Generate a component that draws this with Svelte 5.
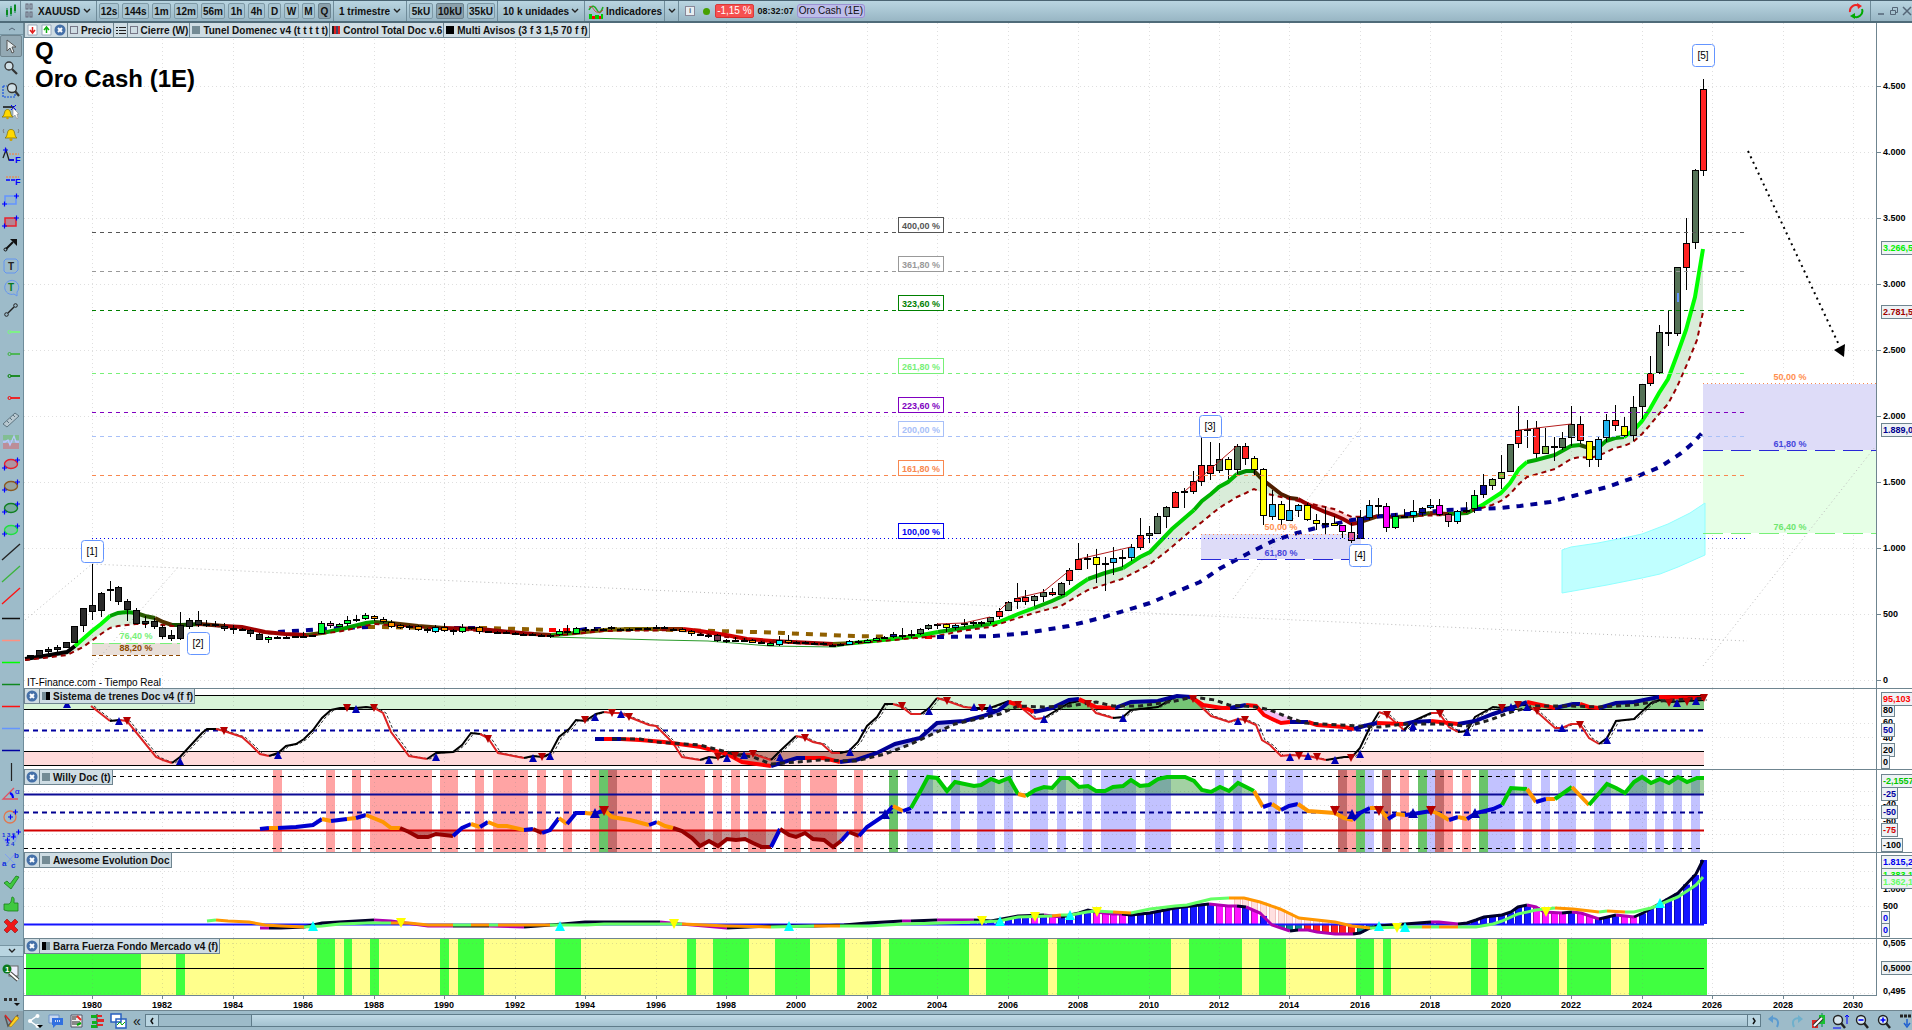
<script lang="ts">
    type Point = [number, number];
    type Run = [string, string];

    // Horizontal scale: one bar per quarter, bar 0 is 1980 Q1
    const barX = (q: number) => 92 + q * 8.805;
    const priceY = (price: number) => 680 - price * 0.132;

    const years = Array.from({ length: 26 }, (_, i) => 1980 + i * 2);
    const prices = [0, 500, 1000, 1500, 2000, 2500, 3000, 3500, 4000, 4500];
    const priceLabel = (p: number) => (p < 1000 ? String(p) : `${Math.floor(p / 1000)}.${String(p % 1000).padStart(3, "0")}`);

    const intervals = [
        { name: "12s", width: 20 },
        { name: "144s", width: 27 },
        { name: "1m", width: 19 },
        { name: "12m", width: 24 },
        { name: "56m", width: 24 },
        { name: "1h", width: 17 },
        { name: "4h", width: 17 },
        { name: "D", width: 13 },
        { name: "W", width: 15 },
        { name: "M", width: 13 },
        { name: "Q", width: 13 },
    ];
    const units = [
        { name: "5kU", width: 24 },
        { name: "10kU", width: 28 },
        { name: "35kU", width: 28 },
    ];
    let interval = $state("Q");
    let unit = $state("10kU");
    let tool = $state(0);

    const tools: [string, string, string][] = [
        ["cursor", "#ddd", "Cursor"],
        ["zoom", "#333", "Zoom"],
        ["zoomarea", "#333", "Zoom de zona"],
        ["bellset", "#ffd800", "Crear alerta"],
        ["bell", "#ffd800", "Alertas"],
        ["fibext", "#00f", "Extensiones Fibonacci"],
        ["fib", "#00f", "Retrocesos Fibonacci"],
        ["rect", "#6495ff", "Zona azul"],
        ["rect", "#e8202c", "Zona roja"],
        ["arrow", "#111", "Flecha"],
        ["text", "#222", "Texto"],
        ["note", "#0a7a1a", "Nota"],
        ["segment", "#222", "Segmento"],
        ["ray", "#78ff78", "Rayo verde claro"],
        ["ray", "#3cb43c", "Rayo verde"],
        ["ray", "#008000", "Rayo verde oscuro"],
        ["ray", "#ff0000", "Rayo rojo"],
        ["ruler", "#5d7480", "Regla"],
        ["channel", "#a0b4ff", "Canal"],
        ["ellipse", "#e8202c", "Elipse roja"],
        ["ellipse", "#8b5a20", "Elipse marrón"],
        ["ellipse", "#108020", "Elipse verde"],
        ["ellipse", "#20e040", "Elipse verde claro"],
        ["line", "#222", "Recta negra"],
        ["line", "#3cb43c", "Recta verde"],
        ["line", "#ff1010", "Recta roja"],
        ["hline", "#111", "Horizontal negra"],
        ["hline", "#ff9080", "Horizontal salmón"],
        ["hline", "#00ff00", "Horizontal lima"],
        ["hline", "#108820", "Horizontal verde"],
        ["hline", "#ff1010", "Horizontal roja"],
        ["hline", "#6495ff", "Horizontal azul"],
        ["hline", "#0000a0", "Horizontal marino"],
        ["vline", "#222", "Vertical"],
        ["angle", "#e05060", "Ángulo"],
        ["circle", "#e07850", "Círculo"],
        ["waves", "#1030e0", "Ondas de Elliott"],
        ["abc", "#1030e0", "Ondas abc"],
        ["check", "#40c840", "Correcto"],
        ["thumb", "#40c840", "Me gusta"],
        ["cross", "#f01818", "Borrar"],
    ];

    const palette: Record<string, string> = {
        K: "#2b2b2b",
        G: "#00ff33",
        P: "#e0559b",
        O: "#ff9500",
        C: "#00ffff",
        M: "#ff00ff",
        A: "#7a3a50",
        N: "#0c0c9c",
        S: "#557257",
        R: "#ff2222",
        Y: "#ffff00",
        B: "#22b4ee",
        L: "#7fba3c",
    };

    // One candle per quarter from bar -7: colour, high, body top, body bottom, low
    const candles = `K655,655,656,657 K650,650,656,656 K647,649,652,654 K645,647,650,652 K642,642,648,648 K626,626,643,643 K608,608,626,632
K564,605,612,620 K592,593,611,617 K581,589,591,601 K586,587,602,605 K599,601,610,621 K608,610,624,624 K616,621,624,628 K618,621,627,629
K625,627,637,639 K630,635,639,641 K612,625,639,640 K618,620,627,629 K611,620,625,627 K620,624,625,627 K621,624,626,627 K623,626,629,631
K625,628,629,634 K628,629,631,631 K629,630,634,637 K633,634,640,640 G636,637,640,643 K636,637,638,639 C636,637,638,639 K636,636,638,638
K632,636,637,638 K635,635,636,637 G621,623,634,634 P621,623,626,628 G623,624,627,627 G616,620,624,626 K615,619,620,622 G613,615,619,620
O615,616,619,621 O617,619,622,623 O620,622,627,628 O624,625,628,629 O625,626,628,630 O625,626,630,631 O628,629,631,633 C625,627,632,633
O623,627,631,632 K629,630,632,635 G624,627,632,633 K627,627,629,630 O626,627,632,634 K631,631,633,633 K631,632,633,634 K631,632,633,634
K632,633,634,635 K633,634,635,635 K633,634,635,636 K634,635,636,636 K634,635,636,638 G629,631,635,636 P625,631,633,635 G627,628,634,634
K627,629,630,632 K627,629,630,631 K628,629,630,631 M626,627,629,630 K628,629,630,631 K628,629,630,631 K628,628,630,630 K627,628,629,630
K625,627,628,629 P626,627,629,629 K628,629,630,630 O628,629,632,632 O630,631,634,636 K633,634,635,636 K634,635,636,638 A634,635,641,642
K639,640,641,643 K637,640,641,642 K638,640,641,642 O639,640,643,643 K641,642,643,644 G642,643,646,646 C636,640,645,646 O635,640,643,644
K641,642,643,644 K641,642,643,644 K642,643,644,645 K642,643,644,645 K644,645,646,646 C643,644,646,646 C640,641,645,645 O640,641,643,644
G639,640,643,643 G637,638,641,641 K636,637,638,639 N632,634,637,638 K628,635,636,639 K630,634,636,638 S628,629,634,635 S624,625,629,630
R623,624,626,629 Y623,624,628,632 B624,625,628,630 R619,623,625,627 K621,622,624,626 K621,622,624,626 S617,617,622,624 R608,611,617,619
S601,602,611,611 R583,598,602,609 R590,597,602,605 S595,596,601,606 S589,592,597,602 R588,592,595,596 S582,583,595,596 R568,570,581,585
R543,559,570,570 K554,558,559,569 Y549,557,565,583 B557,563,565,591 B547,558,563,575 K550,557,559,567 B544,547,558,561 R518,535,548,550
S526,533,536,543 S513,516,534,534 S506,507,517,528 R491,492,508,508 K488,491,492,508 R471,481,492,494 R426,465,482,486 R442,465,474,480
S443,459,471,473 Y457,459,470,479 S444,446,470,474 R443,446,459,465 Y456,458,470,475 Y468,469,516,525 B490,504,517,520 Y501,504,520,525
B497,510,521,521 B504,505,511,517 Y503,505,520,521 Y514,520,524,530 K507,523,524,534 Y516,523,526,526 M525,525,532,538 P523,532,541,543
N510,517,539,539 B500,505,518,520 K498,505,506,516 M503,506,528,532 G513,516,528,529 K509,516,517,518 C500,511,516,522 N507,508,513,516
B499,505,508,509 M499,505,515,516 P513,514,522,527 C510,511,522,524 O502,510,511,513 G490,495,509,513 N474,485,495,498 L478,479,486,490
L455,472,479,489 S444,444,472,472 R406,430,444,448 K420,429,431,448 R421,428,454,458 L428,446,454,454 Y437,446,448,461 S432,438,448,450
S406,424,438,446 R416,424,441,444 Y441,441,460,467 B437,439,460,467 B414,420,438,442 R405,420,426,431 Y417,426,436,437 S396,407,436,441
S384,384,407,419 R356,373,384,386 S325,332,373,374 K310,332,334,346 S267,267,334,336 R218,243,268,290 S169,170,243,249 R79,89,171,176`
        .split(/\s+/)
        .map((entry, i) => {
            const [high, top, bottom, low] = entry.slice(1).split(",").map(Number);
            return { x: Math.round(barX(i - 7)), fill: palette[entry[0]], high, top, bottom, low };
        });

    const parse = (text: string): Point[] => text.trim().split(/\s+/).map((p) => p.split(",").map(Number) as Point);

    // Each run starts where the previous one ended
    function segments(runs: Run[]) {
        let last = "";
        return runs.map(([color, text]) => {
            const points = `${last} ${text}`.trim();
            last = text.trim().split(/\s+/).pop() ?? "";
            return { color, points };
        });
    }
    const joined = (runs: Run[]) => runs.map((r) => r[1]).join(" ");

    const average: Run[] = [
        ["#000", "25,659 44,656 67,652 75,646"],
        ["#00ff00", "92,631 101,624 110,616"],
        ["#00a000", "118,613 127,612 136,613"],
        ["#285a00", "145,616 155,618"],
        ["#503200", "163,622 172,625"],
        ["#145000", "181,625 200,624"],
        ["#5a1e00", "224,626"],
        ["#a00000", "242,627 265,632 285,634 306,635"],
        ["#505000", "322,633"],
        ["#00a000", "342,629 366,623 374,622"],
        ["#325a00", "391,623"],
        ["#5a3200", "418,626 444,628"],
        ["#960000", "480,629 510,632 534,634"],
        ["#781e00", "551,635"],
        ["#289600", "576,633"],
        ["#786400", "604,630 632,629 660,629"],
        ["#8c2800", "683,629"],
        ["#d20000", "700,631 726,635 747,639 772,641"],
        ["#a00000", "833,644"],
        ["#646400", "854,643"],
        ["#00dc00", "883,640 911,637 938,632"],
        ["#00a800", "964,628 990,624"],
        ["#00e800", "999,622 1018,614 1034,608"],
        ["#00b400", "1052,601 1065,595"],
        ["#00e000", "1079,585 1088,579"],
        ["#00a800", "1105,573 1123,568"],
        ["#00d400", "1140,557 1150,552 1172,529 1194,510"],
        ["#00b400", "1202,501 1211,494 1219,487 1228,482 1237,474"],
        ["#008c00", "1246,471 1254,471"],
        ["#3c3200", "1263,480"],
        ["#501e00", "1272,487 1281,494 1290,498 1298,499"],
        ["#960000", "1307,504 1316,508 1325,512 1334,515 1343,519 1352,524 1357,523"],
        ["#5a2800", "1363,521 1378,516"],
        ["#7a1e00", "1396,517"],
        ["#3c5a00", "1413,516 1430,513"],
        ["#781e00", "1448,514"],
        ["#148c00", "1467,513 1477,508"],
        ["#00ff00", "1484,504 1501,493 1510,483 1519,469 1527,462"],
        ["#00a800", "1536,460 1555,455 1571,446 1580,445"],
        ["#285000", "1589,448 1598,448"],
        ["#00a000", "1606,441 1615,438 1624,437"],
        ["#00ff00", "1634,430 1642,421 1650,409 1659,393 1668,379 1677,355 1686,330 1695,297 1703,249"],
    ];

    const lowerBand =
        "25,660 44,658 67,655 83,647 101,634 110,628 118,626 136,624 155,624 172,626 204,625 242,628 265,633 306,636 342,631 374,624 418,627 480,631 551,636 604,631 683,630 726,637 772,642 833,645 883,641 937,636 961,631 990,627 1018,618 1034,613 1061,606 1079,595 1088,590 1122,579 1149,565 1167,551 1194,528 1202,522 1219,508 1237,497 1246,493 1254,489 1263,493 1281,497 1307,503 1334,509 1352,517 1378,516 1413,516 1448,515 1475,510 1492,505 1501,501 1510,494 1519,484 1527,477 1555,469 1571,459 1580,457 1589,458 1598,456 1615,448 1624,446 1633,442 1642,434 1650,425 1659,414 1668,404 1677,387 1688,362 1697,340 1703,312";

    const slowTrend =
        "937,637 994,636 1026,633 1069,626 1104,617 1150,603 1176,592 1200,582 1219,569 1247,554 1273,541 1297,533 1320,527 1352,520 1383,516 1420,513 1447,510 1477,509 1500,508 1520,506 1550,502 1573,496 1607,487 1633,478 1660,467 1680,454 1693,443 1702,433";
    const earlyTrend: Run[] = [
        ["#000090", "278,632 309,630 340,628 368,627"],
        ["#906000", "375,627 440,628"],
        ["#000090", "460,628 480,628"],
        ["#906000", "486,628 520,629 549,630"],
        ["#ff0000", "551,630 580,630"],
        ["#000090", "586,629 610,629"],
        ["#906000", "640,629 714,631 754,632 783,633 854,636 911,637"],
        ["#ff0000", "937,637"],
    ];

    // Area between two lines, limited to the stretch from x0 to x1
    function band(upper: string, lower: string, x0: number, x1: number) {
        const inside = (p: Point) => p[0] >= x0 && p[0] <= x1;
        return [...parse(upper).filter(inside), ...parse(lower).filter(inside).reverse()].join(" ");
    }
    const bands = [
        [24, 165],
        [880, 1282],
        [1470, 1704],
    ].map(([a, b]) => band(joined(average), lowerBand, a, b));

    const divergences = ["937,624 964,623 990,617", "999,611 1008,602", "1017,598 1043,592 1070,570", "1079,559 1131,547", "1185,491 1237,446", "1519,430 1571,424"];

    const levels = [
        { y: 232, label: "400,00 %", color: "#555", dash: "4 4" },
        { y: 271, label: "361,80 %", color: "#999", dash: "4 4" },
        { y: 310, label: "323,60 %", color: "#008000", dash: "4 4" },
        { y: 373, label: "261,80 %", color: "#78f078", dash: "4 4" },
        { y: 412, label: "223,60 %", color: "#8000c0", dash: "4 4" },
        { y: 436, label: "200,00 %", color: "#a8c0f8", dash: "4 4" },
        { y: 475, label: "161,80 %", color: "#f88850", dash: "4 4" },
        { y: 538, label: "100,00 %", color: "#0000f0", dash: "1 3" },
    ];
    const waves = [
        { x: 92, y: 551, label: "[1]" },
        { x: 198, y: 643, label: "[2]" },
        { x: 1210, y: 426, label: "[3]" },
        { x: 1360, y: 555, label: "[4]" },
        { x: 1703, y: 55, label: "[5]" },
    ];
    const guides = ["25,620 92,564 1747,641", "93,665 179,566", "1233,599 1361,428", "1703,666 1875,447"];

    const trainFast: Run[] = [
        ["#d22", "91,706 110,721"],
        ["#000", "119,720"],
        ["#d22", "127,721 156,757 163,760 172,763"],
        ["#000", "180,757 202,733 207,729 216,729"],
        ["#d22", "224,731 242,737 251,745 260,754 269,756"],
        ["#000", "278,753 286,746 296,744 304,739 313,730 322,718 331,710 340,708 347,708 356,708 366,707 374,708"],
        ["#d22", "383,713 391,732 409,756 427,759"],
        ["#000", "436,753 453,752 462,745 471,733 480,734"],
        ["#d22", "488,738 498,753 524,758"],
        ["#000", "533,756 542,757 550,754 559,737 569,729 576,720 585,721 596,714 604,712"],
        ["#d22", "612,713 621,713 629,717 649,725 656,726 673,743 682,757 700,760"],
        ["#000", "709,757 718,758 727,755 735,755 744,754"],
        ["#d22", "753,754 771,760"],
        ["#000", "780,751 796,736"],
        ["#d22", "805,738 813,742 822,744 832,753 840,753"],
        ["#000", "849,751 858,742 867,726 877,717 885,704 893,704"],
        ["#d22", "902,707 911,714 921,714"],
        ["#000", "929,708 937,698"],
        ["#d22", "947,701 964,707 974,708"],
        ["#000", "990,708 1009,701"],
        ["#d22", "1018,705 1035,719 1044,718"],
        ["#000", "1052,713 1069,703 1079,701"],
        ["#d22", "1088,704 1096,713 1113,718"],
        ["#000", "1123,717 1131,710 1158,707 1175,697 1185,697"],
        ["#d22", "1193,699 1211,716 1229,722 1238,719 1245,720 1256,725 1262,740 1270,745 1281,756 1290,755 1308,756 1326,760"],
        ["#000", "1344,757 1352,757 1360,748 1370,727 1379,712"],
        ["#d22", "1387,715 1404,730"],
        ["#000", "1413,721 1431,713"],
        ["#d22", "1439,713 1449,727 1458,732"],
        ["#000", "1467,731 1475,717 1493,707 1502,708 1511,707 1518,705 1527,705"],
        ["#d22", "1536,711 1555,728 1562,728 1571,724 1580,724 1589,738 1599,744"],
        ["#000", "1607,738 1616,721 1634,719 1651,703 1659,700 1669,702 1704,700"],
    ];
    const trainSlow: Run[] = [
        ["#000096", "595,739 604,739"],
        ["#f00", "612,739"],
        ["#000096", "621,739"],
        ["#f00", "640,740 664,742 701,747 727,754 742,762 771,766"],
        ["#000096", "797,758 805,758"],
        ["#f00", "824,758 840,762"],
        ["#000096", "856,760 877,753 895,744 920,738 937,723 964,721 983,716 999,710 1009,702"],
        ["#f00", "1018,705 1034,712"],
        ["#000096", "1052,708 1069,700 1079,699"],
        ["#f00", "1096,707 1115,708"],
        ["#000096", "1131,702 1158,701 1177,696 1191,697"],
        ["#f00", "1203,705 1222,708 1230,708"],
        ["#000096", "1246,705"],
        ["#f00", "1256,706 1264,715 1270,718 1281,723 1290,722"],
        ["#000096", "1308,722"],
        ["#f00", "1317,725 1344,727 1354,729"],
        ["#000096", "1364,726 1377,723"],
        ["#f00", "1404,724"],
        ["#000096", "1413,722 1431,721"],
        ["#f00", "1458,724"],
        ["#000096", "1475,721 1493,714 1511,708 1527,702"],
        ["#f00", "1536,704 1555,708"],
        ["#000096", "1573,704 1580,704"],
        ["#f00", "1589,707 1599,708"],
        ["#000096", "1616,703 1634,702 1659,697"],
        ["#f00", "1704,698"],
    ];
    const trainSignal =
        "612,739 640,739 656,742 700,745 738,755 753,757 771,764 797,762 820,760 856,761 885,754 911,744 937,732 955,724 1000,714 1018,706 1044,707 1069,706 1096,702 1113,706 1140,706 1175,701 1193,697 1215,700 1229,705 1256,707 1270,710 1290,718 1305,723 1340,725 1379,727 1404,724 1440,724 1467,726 1490,720 1511,712 1535,706 1571,706 1599,707 1634,705 1659,701 1704,698";
    const trainDown = parse(
        "127,721 224,731 347,708 374,708 488,739 542,757 585,720 612,713 629,717 718,757 735,756 753,754 805,738 902,706 947,701 982,708 1018,705 1088,704 1193,699 1245,720 1299,756 1317,757 1351,758 1387,715 1440,714 1502,708 1518,705 1537,711 1580,725 1669,703 1687,702 1704,698",
    );
    const trainUp = parse(
        "67,704 119,721 180,761 278,755 356,709 436,757 533,758 550,756 595,717 621,714 709,760 727,758 744,755 780,757 850,752 929,711 974,707 990,708 1044,719 1123,718 1238,721 1290,757 1308,756 1335,760 1360,754 1413,726 1467,732 1511,707 1527,707 1562,728 1607,740 1677,703 1696,701",
    );

    const willyBands: [string, string][] = [
        ["#ffa4a4", "273,282 326,335 352,361 370,432 440,458 475,484 493,528 537,546 563,572 590,599 617,652 660,705 713,722 731,740 748,766 784,801 810,837 854,863 1347,1356 1400,1409 1444,1453 1462,1471"],
        ["#6ac46a", "599,608 889,898 1356,1365 1418,1427 1479,1488"],
        ["#c46a6a", "608,617 1338,1347 1382,1391 1435,1444"],
        ["#c2c2ff", "907,933 951,960 977,995 1004,1013 1030,1048 1057,1066 1083,1092 1101,1136 1145,1171 1215,1224 1233,1242 1268,1277 1285,1303 1365,1374 1427,1435 1488,1515 1523,1532 1541,1550 1558,1576 1594,1611 1629,1647 1655,1664 1673,1682 1691,1700"],
    ];
    const B = "#0000d0";
    const O = "#ff9600";
    const D = "#960000";
    const G = "#00c800";
    const willy: Run[] = [
        [B, "260,829 269,828"],
        [O, "278,828"],
        [B, "296,827 313,825 322,819"],
        [O, "331,821"],
        [B, "347,819"],
        [O, "356,818"],
        [B, "366,815"],
        [O, "383,822 391,828 400,828"],
        [D, "409,832 418,837 428,837 436,834 453,836"],
        [B, "462,828 471,824"],
        [O, "480,827"],
        [B, "488,822"],
        [O, "498,826 507,826 524,830"],
        [B, "533,829"],
        [D, "542,833"],
        [B, "550,830 559,818"],
        [O, "567,824"],
        [B, "576,813 585,813"],
        [O, "595,814"],
        [B, "604,810"],
        [O, "612,817 630,820 649,825"],
        [B, "657,822"],
        [O, "665,826 673,828"],
        [D, "682,831 692,838 700,846 709,841 718,846 727,839 736,840 745,839 753,843 762,847 771,847"],
        [B, "780,829"],
        [D, "789,835 796,837 805,833 813,839 824,840 833,847 841,841"],
        [B, "849,832"],
        [D, "859,836"],
        [B, "867,827 885,815 893,806"],
        [O, "903,811"],
        [B, "911,808"],
        [G, "920,792 928,777 937,778 947,791 955,782 974,786 981,785 991,779 999,782 1009,778 1018,794"],
        [O, "1026,796"],
        [G, "1035,790 1044,787 1052,788 1061,778 1069,778 1079,787 1088,786 1096,791 1105,791 1113,787 1123,786 1131,780 1140,786 1149,785 1158,779 1167,777 1185,777 1194,781 1202,790 1211,792 1220,787 1229,791 1238,783 1254,791"],
        [O, "1263,807"],
        [B, "1272,804"],
        [O, "1281,810"],
        [B, "1289,806 1298,804"],
        [O, "1308,811 1335,813 1344,818 1353,820"],
        [B, "1360,813 1370,808"],
        [O, "1379,808 1388,819"],
        [B, "1396,814"],
        [O, "1405,815"],
        [B, "1413,814 1431,811"],
        [O, "1439,814 1449,820"],
        [B, "1458,817"],
        [O, "1467,819"],
        [B, "1476,813 1493,809 1502,805"],
        [G, "1511,788 1527,789"],
        [O, "1536,802"],
        [B, "1546,799"],
        [O, "1555,799"],
        [G, "1572,787"],
        [O, "1589,805"],
        [G, "1607,784 1616,788 1625,793 1634,782 1642,777 1651,783 1660,779 1669,783 1678,777 1687,782 1697,778 1704,778"],
    ];
    const willyUp = parse("595,813 885,814 1352,814 1413,813 1475,813");
    const willyDown = parse("604,811 1335,811 1379,811 1431,811");

    const LIME = "#64ff64";
    const PURPLE = "#b000b0";
    const DARK = "#000028";
    const evolutionSlow: Run[] = [
        [LIME, "207,921 216,920"],
        [O, "228,921 249,922 265,925 281,926 304,927"],
        [LIME, "322,926 340,924 367,923 391,923"],
        [O, "409,923 428,925 453,925"],
        [LIME, "471,925"],
        [O, "489,925"],
        [LIME, "498,925"],
        [O, "550,925"],
        [LIME, "587,925 604,924 660,924 682,924"],
        [O, "727,926 771,927"],
        [LIME, "814,926"],
        [O, "840,926"],
        [LIME, "869,926 905,924 981,922 999,921 1018,917 1052,916"],
        [O, "1061,915"],
        [LIME, "1071,915 1087,912 1096,911 1113,912"],
        [O, "1131,913"],
        [LIME, "1150,909 1175,906 1187,905 1211,899 1229,898"],
        [O, "1244,898 1260,902 1280,909 1299,918 1335,922 1352,926 1370,928"],
        [LIME, "1405,927 1422,927"],
        [O, "1431,927"],
        [LIME, "1439,927"],
        [O, "1458,927"],
        [LIME, "1476,927 1493,924 1502,921 1518,914 1536,910 1555,908"],
        [O, "1573,909 1599,912"],
        [LIME, "1607,911"],
        [O, "1625,912"],
        [LIME, "1634,912 1651,908 1661,904 1678,897 1696,885 1703,877"],
    ];
    const evolutionFast: Run[] = [
        [PURPLE, "260,928 269,928"],
        [DARK, "281,928 304,927 322,923 374,920"],
        [PURPLE, "391,921 428,926 453,926"],
        [DARK, "489,926"],
        [PURPLE, "524,927"],
        [DARK, "551,925 585,922 660,922"],
        [PURPLE, "681,924 727,928"],
        [DARK, "771,926 814,926 844,925 867,923 902,921"],
        [PURPLE, "911,921"],
        [DARK, "937,920"],
        [PURPLE, "974,920"],
        [DARK, "991,921 1018,916 1044,915"],
        [PURPLE, "1061,917"],
        [DARK, "1079,913 1088,910 1096,912"],
        [PURPLE, "1113,914 1122,914"],
        [DARK, "1131,915 1150,913 1175,908 1191,906 1209,904"],
        [PURPLE, "1228,906 1237,906"],
        [DARK, "1246,907"],
        [PURPLE, "1260,913 1272,925 1281,928 1290,931"],
        [DARK, "1298,930"],
        [PURPLE, "1308,930 1317,932 1335,934 1353,934"],
        [DARK, "1360,933 1370,928 1378,926 1405,924 1431,922"],
        [PURPLE, "1439,922 1458,924"],
        [DARK, "1467,923 1476,920 1484,917 1502,915 1511,912 1518,907 1527,905"],
        [PURPLE, "1536,907 1544,912 1562,913"],
        [DARK, "1572,912"],
        [PURPLE, "1581,913 1599,919"],
        [DARK, "1616,915"],
        [PURPLE, "1634,917"],
        [DARK, "1643,913 1659,904 1678,893 1696,874 1703,860"],
    ];
    const evolutionDown = parse("401,923 674,924 982,921 1035,917 1097,912 1397,928 1546,912");
    const evolutionUp = parse("313,926 560,926 789,926 1000,921 1070,915 1379,926 1405,927 1660,903");

    function valueAt(line: Point[], x: number) {
        const i = Math.max(1, line.findIndex((p) => p[0] >= x));
        const [a, b] = [line[i - 1], line[i]];
        return a[1] + ((b[1] - a[1]) * (x - a[0])) / (b[0] - a[0]);
    }
    const fastLine = parse(joined(evolutionFast));
    const slowLine = parse(joined(evolutionSlow));
    const falling = [107, 109, 114, 115, 116, 117, 128, 129, 130, 132, 164, 165, 166, 167, 169, 170, 174, 175];
    const histogram = Array.from({ length: 84 }, (_, i) => {
        const q = i + 100;
        const x = Math.round(barX(q));
        const y = valueAt(fastLine, Math.min(x, 1703));
        const color = y > 924 ? (q > 137 && q < 144 ? "#ff1e1e" : "#0a8c8c") : falling.includes(q) ? "#ff14ff" : "#1414ff";
        return { x: x - 3, top: Math.min(y, 924), height: Math.abs(924 - y), color };
    });
    const fading = Array.from({ length: 15 }, (_, i) => {
        const x = Math.round(barX(130 + i));
        return { x: x - 3, top: valueAt(slowLine, x), bottom: Math.min(924, valueAt(fastLine, x)) };
    }).filter((b) => b.bottom > b.top);

    const strength = parse(
        "26,141 176,185 317,335 344,352 370,379 440,449 458,484 555,581 687,696 713,749 775,810 837,845 872,881 889,969 986,1048 1057,1171 1189,1242 1259,1286 1356,1374 1383,1391 1471,1488 1497,1559 1567,1611 1629,1707",
    );

    const up = (p: Point, r: number) => `${p[0] - r},${p[1] + r} ${p[0]},${p[1] - r} ${p[0] + r},${p[1] + r}`;
    const down = (p: Point, r: number) => `${p[0] - r},${p[1] - r} ${p[0]},${p[1] + r} ${p[0] + r},${p[1] - r}`;
</script>

{#snippet lines(runs: Run[], width: number)}
    {#each segments(runs) as s}
        <polyline points={s.points} fill="none" stroke={s.color} stroke-width={width} />
    {/each}
{/snippet}

{#snippet grid(top: number, bottom: number, rows: number[])}
    {#each years as _, i}
        <line class="grid" x1={Math.round(barX(i * 8)) + 0.5} x2={Math.round(barX(i * 8)) + 0.5} y1={top} y2={bottom} />
    {/each}
    {#each rows as y}
        <line class="grid" x1="24" x2="1876" y1={y + 0.5} y2={y + 0.5} />
    {/each}
{/snippet}

{#snippet tag(y: number, label: string, color: string, width: number)}
    <rect x="1881.5" y={y - 6.5} {width} height="13" fill="#eef2f5" stroke="#6f8590" />
    <text class="axis" x="1883" y={y + 3} fill={color}>{label}</text>
{/snippet}

{#snippet title(name: string, mark: string)}
    <div class="legend">
        <button class="close" aria-label="Cerrar {name}">
            <svg width="12" height="12" viewBox="0 0 12 12"><circle cx="6" cy="6" r="5.5" fill="#4570a8" /><path d="M4 4l4 4M8 4l-4 4" stroke="#fff" stroke-width="2" /></svg>
        </button>
        <button class="series"><span class="swatch {mark}"></span>{name}</button>
    </div>
{/snippet}

{#snippet chevron()}
    <svg width="8" height="6" viewBox="0 0 8 6"><path d="M1 1l3 3 3-3" fill="none" stroke="#222" stroke-width="1.4" /></svg>
{/snippet}

{#snippet plus(x: number, y: number)}
    <path d="M{x - 2} {y}h5M{x + 0.5} {y - 2.5}v5" stroke="#00f" stroke-width="1.2" />
{/snippet}

{#snippet magnifier(x: number, sign: string)}
    <circle cx={x} cy="7" r="4.5" fill="#d8e6ee" stroke="#222" stroke-width="1.4" />
    <path d="M{x + 3} 10l4 5" stroke="#222" stroke-width="2.4" />
    {#if sign !== ""}
        <path d={sign === "+" ? `M${x - 2.5} 7h5M${x} 4.5v5` : `M${x - 2.5} 7h5`} stroke="#00f" stroke-width="1.6" />
    {/if}
{/snippet}

{#snippet toolIcon(kind: string, color: string)}
    <svg width="22" height="20" viewBox="0 0 22 20" fill="none">
        {#if kind === "cursor"}
            <path d="M7 4v11l3-3 2 5 2-1-2-5h4z" fill="#e8eef0" stroke="#555" />
        {:else if kind === "zoom"}
            <circle cx="9" cy="8" r="4" fill="#cfdfe6" stroke={color} stroke-width="1.3" /><path d="M12 11l5 5" stroke={color} stroke-width="2.2" />
        {:else if kind === "zoomarea"}
            <path d="M3 6h4M3 6v11h12v-3" stroke="#1450e0" stroke-width="1.2" stroke-dasharray="2 1" />
            <circle cx="12" cy="8" r="4.5" fill="#cfdfe6" stroke={color} stroke-width="1.3" /><path d="M15 11l4 5" stroke={color} stroke-width="2.2" />
        {:else if kind === "bellset"}
            <path d="M2 15c2-1 2-3 3-6 1-2 4-2 5 0 1 3 1 5 3 6z" fill={color} stroke="#7a6a00" stroke-width=".7" /><circle cx="7.500" cy="16" r="1.300" fill="#c8a000" />
            <path d="M3 5h11" stroke="#111" stroke-width="1.500" /><path d="M11 3l5 5M16 3l-5 5" stroke="#00f" /><path d="M13 6v9l2-2 2 4 1-1-1-4h2z" fill="#fff" stroke="#888" stroke-width=".6" />
        {:else if kind === "bell"}
            <path d="M5 14c2-1 2-4 3-7 1-2 5-2 6 0 1 3 1 6 3 7z" fill={color} stroke="#7a6a00" stroke-width=".7" /><circle cx="11" cy="15.500" r="1.500" fill="#c8a000" />
            <path d="M4 5c-1 1-1 2 0 4M18 5c1 1 1 2 0 4" stroke="#777" />
        {:else if kind === "fibext"}
            <path d="M3 12L6 4l3 10h5" stroke="#222" stroke-width="1.300" />{@render plus(5, 4)}
            <path d="M9 8h10" stroke="#ff7a30" stroke-dasharray="2 1" /><path d="M9 14h5" stroke="#00f" stroke-width="1.500" />
            <text x="15" y="17" font-size="9" font-weight="bold" fill={color}>F</text>
        {:else if kind === "fib"}
            <path d="M6 9h13" stroke="#ff7a30" stroke-dasharray="2 1" /><path d="M6 12h9" stroke="#00f" stroke-width="1.500" stroke-dasharray="4 1" />
            <text x="15" y="17" font-size="9" font-weight="bold" fill={color}>F</text>
        {:else if kind === "rect"}
            <path d="M5 6h11v8H5z" stroke={color} stroke-width="1.5" fill={color} fill-opacity={color === "#e8202c" ? 0.35 : 0.1} />
            {@render plus(4, 14)}{@render plus(16, 6)}
        {:else if kind === "arrow"}
            <path d="M6 15l7-7" stroke={color} stroke-width="2" /><path d="M10 5h7v7z" fill={color} /><circle cx="5.500" cy="15.500" r="1.500" stroke={color} />
        {:else if kind === "text"}
            <path d="M6 3h10l2 2v9l-3 3H6l-2-2V5z" stroke="#6495f0" />
            <text x="8" y="14" font-size="10" font-weight="bold" fill={color}>T</text>
        {:else if kind === "note"}
            <path d="M14 16l3 2v-4a7 7 0 1 0-3 2z" stroke="#6495f0" />
            <text x="8" y="13" font-size="10" font-weight="bold" fill={color}>T</text>
        {:else if kind === "segment"}
            <path d="M8 13l6-6" stroke={color} stroke-width="1.4" /><circle cx="6.500" cy="14.500" r="1.800" stroke={color} /><circle cx="15.500" cy="5.500" r="1.800" stroke={color} />
        {:else if kind === "ray"}
            <circle cx="9.500" cy="10" r="1.500" stroke={color} /><path d="M11 10h9" stroke={color} stroke-width="1.6" />
        {:else if kind === "ruler"}
            <path d="M3 14L15 3l4 3L7 17z" fill="#b8c8d0" stroke={color} /><path d="M7 11l2 2M10 8l2 2M13 5l2 2" stroke={color} />
        {:else if kind === "channel"}
            <path d="M3 3h16v5H3z" fill="#70c070" fill-opacity=".6" /><path d="M3 11h16v6H3z" fill="#d07078" fill-opacity=".6" />
            <path d="M3 10h2l3-2 2 5 4-9 2 6h3" stroke="#b8c8ff" stroke-width="1.3" />
        {:else if kind === "ellipse"}
            <ellipse cx="11" cy="10" rx="6.500" ry="4.500" fill={color} fill-opacity=".25" stroke={color} stroke-width="1.4" />
            {@render plus(4, 14)}{@render plus(17, 6)}
        {:else if kind === "line"}
            <path d="M2 18L20 2" stroke={color} stroke-width="1.4" />
        {:else if kind === "hline"}
            <path d="M2 10.500h18" stroke={color} stroke-width="1.500" />
        {:else if kind === "vline"}
            <path d="M11.500 1v18" stroke={color} stroke-width="1.200" />
        {:else if kind === "angle"}
            <path d="M18 15H3L14 4" stroke={color} stroke-width="1.3" /><path d="M13 14c0-3-1-4-3-5" stroke="#00f" stroke-width="2" /><text x="15" y="10" font-size="8" fill="#00f">α</text>
        {:else if kind === "circle"}
            <circle cx="10" cy="11" r="6" stroke={color} stroke-width="1.3" />{@render plus(10, 11)}{@render plus(15, 6)}
        {:else if kind === "waves"}
            <path d="M3 10l4 6 4-8 4 6 4-11" stroke="#80a0f0" />
            <text x="2" y="9" font-size="6" font-weight="bold" fill={color}>1 3 5</text><text x="6" y="18" font-size="6" font-weight="bold" fill={color}>2 4</text>
            {@render plus(7, 12)}{@render plus(13, 9)}{@render plus(18, 4)}
        {:else if kind === "abc"}
            <path d="M5 4l11 11M5 15l9-10" stroke="#80a0f0" />
            <text x="14" y="8" font-size="8" font-weight="bold" fill={color}>b</text><text x="2" y="16" font-size="8" font-weight="bold" fill={color}>a</text><text x="11" y="18" font-size="8" font-weight="bold" fill={color}>c</text>
        {:else if kind === "check"}
            <path d="M4 11l3-2 3 3 6-8 3 1-8 12z" fill={color} stroke="#188018" stroke-width=".8" />
        {:else if kind === "thumb"}
            <path d="M4 10h5c3-2 2-5 3-7 3 0 2 4 2 6h4v8H8l-4-1z" fill={color} stroke="#188018" stroke-width=".8" />
        {:else}
            <path d="M4 6l3-3 4 4 4-4 3 3-4 4 4 4-3 3-4-4-4 4-3-3 4-4z" fill={color} stroke="#901010" stroke-width=".6" />
        {/if}
    </svg>
{/snippet}

<div class="platform">
    <header class="toolbar">
        <button class="plain" aria-label="Gráfico"><svg width="14" height="16" viewBox="0 0 14 16"><path d="M3 5v9M7 3v10M11 1v9" stroke="#084" /><path d="M2 7h2v5H2zM6 5h2v6H6zM10 2h2v6h-2z" fill="#0a8a20" /></svg></button>
        <span class="divider"></span>
        <button class="plain link" aria-label="Vincular"><svg width="8" height="16" viewBox="0 0 8 16" fill="none" stroke="#667"><rect x="1" y="1" width="2" height="5" /><rect x="5" y="1" width="2" height="5" /><rect x="1" y="9" width="2" height="5" /><rect x="5" y="9" width="2" height="5" /></svg></button>
        <label class="picker"><select class="symbol" aria-label="Valor"><option>XAUUSD</option></select>{@render chevron()}</label>
        <span class="divider"></span>
        <div class="group">
            {#each intervals as item}
                <button class="key" class:active={interval === item.name} style="width: {item.width}px" onclick={() => (interval = item.name)}>{item.name}</button>
            {/each}
        </div>
        <span class="divider"></span>
        <label class="picker"><select class="period" aria-label="Periodo"><option>1 trimestre</option></select>{@render chevron()}</label>
        <span class="divider"></span>
        <div class="group">
            {#each units as item}
                <button class="key" class:active={unit === item.name} style="width: {item.width}px" onclick={() => (unit = item.name)}>{item.name}</button>
            {/each}
        </div>
        <span class="divider"></span>
        <label class="picker"><select class="amount" aria-label="Unidades"><option>10 k unidades</option></select>{@render chevron()}</label>
        <span class="divider"></span>
        <button class="plain indicators">
            <svg width="16" height="17" viewBox="0 0 16 17" fill="none"><path d="M1 7c3-6 6-4 8 0s4 3 6-3" stroke="#2a2" stroke-width="1.5" /><path d="M1 4c3-2 4 2 6 4s5 2 8-1" stroke="#c44" /><path d="M1 16v-5h3v2h3v-1h4v1h2v-2h2v5z" fill="#0c0" /><path d="M4 13h3v3H4zM11 13h2v3h-2z" fill="#f00" /></svg>
            Indicadores
        </button>
        <span class="divider"></span>
        <button class="plain more" aria-label="Más indicadores">{@render chevron()}</button>
        <span class="divider"></span>
        <button class="info" aria-label="Información">i</button>
        <span class="dot"></span>
        <span class="change">-1,15 %</span>
        <time>08:32:07</time>
        <span class="name">Oro Cash (1E)</span>
        <div class="window">
            <button class="plain" aria-label="Actualizar"><svg width="18" height="16" viewBox="0 0 18 16" fill="none" stroke-width="2"><path d="M3 9a6 6 0 0 1 9-6" stroke="#e22" /><path d="M15 6a6 6 0 0 1-9 7" stroke="#0a0" /><path d="M10 0l5 3-4 3z" fill="#e22" /><path d="M8 10l-5 3 5 3z" fill="#0a0" /></svg></button>
            <span class="divider"></span>
            <button class="plain" aria-label="Minimizar"><svg width="10" height="10"><path d="M2 8h6" stroke="#567" stroke-width="1.5" /></svg></button>
            <button class="plain" aria-label="Restaurar"><svg width="10" height="10" fill="none" stroke="#567"><path d="M1.500 4.500h5v4h-5zM3.500 4V1.500h5v5H7" /></svg></button>
            <button class="plain" aria-label="Cerrar"><svg width="10" height="10"><path d="M1 1l8 8M9 1L1 9" stroke="#567" stroke-width="1.5" /></svg></button>
        </div>
    </header>

    <div class="workspace">
        <nav class="tools" aria-label="Herramientas">
            <button class="scroll up" aria-label="Subir"><svg width="8" height="6"><path d="M1 4l3-2 3 2" fill="none" stroke="#567" /></svg></button>
            {#each tools as [kind, color, name], i}
                <button class="tool" class:active={tool === i} aria-label={name} onclick={() => (tool = i)}>{@render toolIcon(kind, color)}</button>
            {/each}
            <button class="scroll down" aria-label="Bajar">{@render chevron()}</button>
            <button class="tool large" aria-label="Configuración">
                <svg width="22" height="22" viewBox="0 0 22 22"><rect x="9" y="3" width="9" height="10" fill="#eef" stroke="#666" /><path d="M10 10l8 7" stroke="#444" stroke-width="4" /><path d="M10 10l8 7" stroke="#fff" stroke-width="2" /><circle cx="7" cy="6" r="4.500" fill="#0a7a1a" /><text x="5" y="9" font-size="8" font-weight="bold" fill="#fff">1</text></svg>
            </button>
            <button class="tool large" aria-label="Más herramientas">
                <svg width="22" height="22" viewBox="0 0 22 22"><path d="M4 10h3v3H4zM9 10h3v3H9zM14 10h3v3h-3z" fill="#333" /><path d="M14 15h6l-3 3z" fill="#111" /></svg>
            </button>
        </nav>

        <main class="charts">
            <section class="panel price">
                <svg viewBox="24 23 1888 665" preserveAspectRatio="xMaxYMin slice">
                    {@render grid(23, 688, prices.map((p) => Math.round(priceY(p))))}
                    <rect x="92" y="643" width="88" height="12" fill="#e9dfd9" />
                    <rect x="1201" y="534" width="160" height="25" fill="#dedcf8" />
                    <rect x="1703" y="384" width="173" height="66" fill="#dedcf8" />
                    <rect x="1703" y="450" width="173" height="83" fill="#e6ffe6" />
                    <polygon points="1562,550 1571,547 1598,543 1633,536 1642,534 1668,524 1690,513 1705,503 1705,555 1678,567 1660,574 1642,578 1607,585 1562,593" fill="#c0ffff" stroke="#90ffff" />
                    {#each guides as points}
                        <polyline {points} fill="none" stroke="#bbb" stroke-dasharray="1 3" />
                    {/each}
                    {#each bands as points}
                        <polygon {points} fill="#008000" fill-opacity=".15" />
                    {/each}
                    <polygon points="1298,499 1325,506 1352,517 1360,519 1352,524 1325,512" fill="#f00" fill-opacity=".2" />

                    {#each segments(earlyTrend) as s}
                        <polyline points={s.points} fill="none" stroke={s.color} stroke-width="4" stroke-dasharray="7 7" />
                    {/each}
                    {@render lines(average, 4)}
                    <polyline points={lowerBand} fill="none" stroke="#960000" stroke-width="2" stroke-dasharray="5 4" />
                    <polyline points={slowTrend} fill="none" stroke="#000090" stroke-width="4" stroke-dasharray="7 7" />
                    <polyline points="551,637 660,640 708,641 770,646 835,647 854,644" fill="none" stroke="#2a9a2a" />

                    {#each candles as c}
                        <line x1={c.x + 0.5} x2={c.x + 0.5} y1={c.high} y2={c.low} stroke="#000" />
                        <rect x={c.x - 2.5} y={c.top + 0.5} width="6" height={Math.max(1, c.bottom - c.top - 1)} fill={c.fill} stroke="#000" />
                    {/each}
                    <rect x="1677" y="293" width="2" height="9" fill="#6495ff" />
                    {#each divergences as points}
                        <polyline {points} fill="none" stroke="#b41e1e" />
                    {/each}

                    {#each levels as level}
                        <line x1="92" x2="1745" y1={level.y + 0.5} y2={level.y + 0.5} stroke={level.color} stroke-dasharray={level.dash} />
                        <rect x="898.5" y={level.y - 14.5} width="45" height="15" fill="#fff" stroke={level.color} />
                        <text class="small" x="921" y={level.y - 3} fill={level.color}>{level.label}</text>
                    {/each}

                    <line x1="92" x2="180" y1="643.5" y2="643.5" stroke="#78f078" stroke-dasharray="12 5" />
                    <line x1="92" x2="180" y1="655.5" y2="655.5" stroke="#8c4600" stroke-dasharray="4 3" />
                    <text class="small" x="136" y="639" fill="#78f078">76,40 %</text>
                    <text class="small" x="136" y="651" fill="#8c4600">88,20 %</text>
                    <line x1="1201" x2="1361" y1="534.5" y2="534.5" stroke="#f88850" stroke-dasharray="1 3" />
                    <line x1="1201" x2="1361" y1="559.5" y2="559.5" stroke="#2828d8" stroke-dasharray="20 8" />
                    <text class="small" x="1281" y="530" fill="#ff9050">50,00 %</text>
                    <text class="small" x="1281" y="556" fill="#4646dc">61,80 %</text>
                    <line x1="1703" x2="1876" y1="383.5" y2="383.5" stroke="#f88850" stroke-dasharray="1 3" />
                    <line x1="1703" x2="1876" y1="450.5" y2="450.5" stroke="#2828d8" stroke-dasharray="20 8" />
                    <line x1="1703" x2="1876" y1="533.5" y2="533.5" stroke="#78f078" stroke-dasharray="20 8" />
                    <text class="small" x="1790" y="380" fill="#ff9050">50,00 %</text>
                    <text class="small" x="1790" y="447" fill="#4646dc">61,80 %</text>
                    <text class="small" x="1790" y="530" fill="#6ee66e">76,40 %</text>

                    {#each waves as wave}
                        <rect x={wave.x - 10.5} y={wave.y - 10.5} width="22" height="22" rx="3" fill="#fff" stroke="#6495ff" />
                        <text class="wave" x={wave.x} y={wave.y + 4}>{wave.label}</text>
                    {/each}
                    <line x1="1748" y1="151" x2="1839" y2="345" stroke="#000" stroke-width="2" stroke-dasharray="2 4" />
                    <polygon points="1834,350 1845,344 1844,357" />

                    <rect x="1876" y="23" width="36" height="665" fill="#fff" />
                    <line class="edge" x1="1876.5" x2="1876.5" y1="23" y2="688" />
                    {#each prices as p}
                        <line class="edge" x1="1877" x2="1881" y1={Math.round(priceY(p)) + 0.5} y2={Math.round(priceY(p)) + 0.5} />
                        <text class="axis" x="1883" y={Math.round(priceY(p)) + 3}>{priceLabel(p)}</text>
                    {/each}
                    {@render tag(248, "3.266,5", "#00f000", 40)}
                    {@render tag(312, "2.781,5", "#a00000", 40)}
                    {@render tag(430, "1.889,0", "#000090", 40)}
                    <text class="title" x="35" y="59">Q</text>
                    <text class="title" x="35" y="87">Oro Cash (1E)</text>
                    <text class="credit" x="27" y="686">IT-Finance.com - Tiempo Real</text>
                </svg>
                <div class="legend">
                    <button class="close" aria-label="Bajar panel"><svg width="11" height="12" viewBox="0 0 11 12"><path d="M1 1h9v10H1z" fill="#fff" stroke="#9ab" /><path d="M5.500 3v5M3 6l2.500 3L8 6" stroke="#e02020" stroke-width="1.500" fill="none" /></svg></button>
                    <button class="close" aria-label="Subir panel"><svg width="11" height="12" viewBox="0 0 11 12"><path d="M1 1h9v10H1z" fill="#fff" stroke="#9ab" /><path d="M5.500 9V4M3 6l2.500-3L8 6" stroke="#10b010" stroke-width="1.500" fill="none" /></svg></button>
                    <button class="close" aria-label="Cerrar panel"><svg width="12" height="12" viewBox="0 0 12 12"><circle cx="6" cy="6" r="5.500" fill="#4570a8" /><path d="M4 4l4 4M8 4l-4 4" stroke="#fff" stroke-width="2" /></svg></button>
                    <label class="series"><input type="checkbox" />Precio</label>
                    <button class="series" aria-label="Lista"><svg width="10" height="9"><path d="M3 1.500h7M3 4.500h7M3 7.500h7M0 1.500h2M0 4.500h2M0 7.500h2" stroke="#222" /></svg></button>
                    <label class="series"><input type="checkbox" />Cierre (W)</label>
                    <button class="series"><span class="swatch grey"></span>Tunel Domenec v4 (t t t t t)</button>
                    <button class="series"><span class="swatch stripes"></span>Control Total Doc v.6</button>
                    <button class="series"><span class="swatch black"></span>Multi Avisos (3 f 3 1,5 70 f f)</button>
                </div>
            </section>

            <section class="panel trains">
                <svg viewBox="24 689 1888 80" preserveAspectRatio="xMaxYMin slice">
                    <rect x="24" y="695" width="1680" height="14" fill="#d8f4d8" />
                    <rect x="24" y="751" width="1680" height="14" fill="#ffdada" />
                    {@render grid(689, 769, [723, 737])}
                    <polygon points={band(joined(trainSlow), trainSignal, 880, 1010)} fill="#3c3cc8" fill-opacity=".3" />
                    <polygon points={band(joined(trainSlow), trainSignal, 1240, 1310)} fill="#e050e0" fill-opacity=".35" />
                    <polygon points="720,751 880,751 856,760 840,762 797,758 771,766 742,762" fill="#8c3c28" fill-opacity=".5" />
                    <polygon points="999,709 1009,702 1018,705 1034,709" fill="#149614" fill-opacity=".4" />
                    <polygon points="1052,709 1069,700 1079,699 1096,709" fill="#149614" fill-opacity=".5" />
                    <polygon points="1123,709 1131,702 1158,701 1177,696 1191,697 1206,709" fill="#149614" fill-opacity=".5" />
                    <polygon points="1511,709 1527,702 1555,708 1573,704 1599,709 1616,703 1659,697 1704,698 1704,709" fill="#149614" fill-opacity=".4" />
                    {#each [695, 709, 751, 765] as y}
                        <line x1="24" x2="1704" y1={y + 0.5} y2={y + 0.5} stroke="#000" />
                    {/each}
                    <line x1="24" x2="1704" y1="730.5" y2="730.5" stroke="#0000a0" stroke-width="2" stroke-dasharray="5 4" />
                    <g transform="translate(3 0)"><polyline points={joined(trainFast)} fill="none" stroke="#333" stroke-dasharray="3 2" /></g>
                    {@render lines(trainFast, 2)}
                    {@render lines(trainSlow, 4)}
                    <polyline points={trainSignal} fill="none" stroke="#222" stroke-width="3" stroke-dasharray="5 4" />
                    {#each trainDown as p}<polygon points={down(p, 4)} fill="#b40000" />{/each}
                    {#each trainUp as p}<polygon points={up(p, 4)} fill="#0000b4" />{/each}
                    <rect x="1876" y="689" width="36" height="80" fill="#fff" />
                    <line class="edge" x1="1876.5" x2="1876.5" y1="689" y2="769" />
                    <text class="axis" x="1883" y="725">60</text>
                    <text class="axis" x="1883" y="741">40</text>
                    {@render tag(710, "80", "#000", 13)}
                    {@render tag(699, "95,103", "#f00", 40)}
                    {@render tag(730, "50", "#0000a0", 13)}
                    {@render tag(750, "20", "#000", 13)}
                    {@render tag(762, "0", "#000", 8)}
                </svg>
                {@render title("Sistema de trenes Doc v4 (f f)", "split")}
            </section>

            <section class="panel willy">
                <svg viewBox="24 770 1888 82" preserveAspectRatio="xMaxYMin slice">
                    <clipPath id="above"><rect x="24" y="770" width="1852" height="24" /></clipPath>
                    <clipPath id="below"><rect x="24" y="830" width="1852" height="22" /></clipPath>
                    {#each willyBands as [color, text]}
                        {#each parse(text) as [from, to]}
                            <rect x={from} y="770" width={to - from} height="82" fill={color} />
                        {/each}
                    {/each}
                    {@render grid(770, 852, [791, 805, 819, 834])}
                    <polygon points="260,794 {joined(willy)} 1704,794" fill="#008000" fill-opacity=".36" clip-path="url(#above)" />
                    <polygon points="260,830 {joined(willy)} 1704,830" fill="#640000" fill-opacity=".4" clip-path="url(#below)" />
                    {#each [776, 848] as y}
                        <line x1="24" x2="1704" y1={y + 0.5} y2={y + 0.5} stroke="#000" stroke-dasharray="4 4" />
                    {/each}
                    <line x1="24" x2="1704" y1="812.5" y2="812.5" stroke="#000090" stroke-width="2" stroke-dasharray="5 4" />
                    <line x1="24" x2="1704" y1="794.5" y2="794.5" stroke="#0c0c96" stroke-width="2" />
                    <line x1="24" x2="1704" y1="830.5" y2="830.5" stroke="#d20000" stroke-width="2" />
                    {@render lines(willy, 4)}
                    {#each willyUp as p}<polygon points={up(p, 5)} fill="#0000b4" />{/each}
                    {#each willyDown as p}<polygon points={down(p, 5)} fill="#b40000" />{/each}
                    <rect x="1876" y="770" width="36" height="82" fill="#fff" />
                    <line class="edge" x1="1876.5" x2="1876.5" y1="770" y2="852" />
                    <text class="axis" x="1883" y="807">-40</text>
                    <text class="axis" x="1883" y="824">-60</text>
                    {@render tag(781, "-2,1557", "#00c800", 40)}
                    {@render tag(794, "-25", "#0000a0", 16)}
                    {@render tag(812, "-50", "#0000a0", 16)}
                    {@render tag(830, "-75", "#d20000", 16)}
                    {@render tag(845, "-100", "#000", 21)}
                </svg>
                {@render title("Willy Doc (t)", "grey")}
            </section>

            <section class="panel evolution">
                <svg viewBox="24 853 1888 85" preserveAspectRatio="xMaxYMin slice">
                    {@render grid(853, 938, [871, 888, 906])}
                    {#each fading as b}
                        <rect x={b.x + 0.5} y={b.top} width="6" height={b.bottom - b.top} fill="#ffe0e0" stroke="#f4c0c0" />
                    {/each}
                    {#each histogram as b}
                        <rect x={b.x} y={b.top} width="7" height={b.height} fill={b.color} />
                        <rect x={b.x} y={b.top} width="1" height={b.height} fill="#000" fill-opacity=".35" />
                    {/each}
                    <line x1="24" x2="1704" y1="924.5" y2="924.5" stroke="#1414ff" stroke-width="2" />
                    {@render lines(evolutionFast, 3)}
                    {@render lines(evolutionSlow, 3)}
                    {#each evolutionDown as p}<polygon points={down(p, 5)} fill="#ff0" />{/each}
                    {#each evolutionUp as p}<polygon points={up(p, 5)} fill="#0ff" />{/each}
                    <rect x="1876" y="853" width="36" height="85" fill="#fff" />
                    <line class="edge" x1="1876.5" x2="1876.5" y1="853" y2="938" />
                    <text class="axis" x="1883" y="892">1.000</text>
                    <text class="axis" x="1883" y="909">500</text>
                    {@render tag(875, "1.383,1", "#00f000", 40)}
                    {@render tag(862, "1.815,2", "#0000f0", 40)}
                    {@render tag(882, "1.362,1", "#64ff64", 40)}
                    {@render tag(918, "0", "#0000f0", 8)}
                    {@render tag(930, "0", "#0000f0", 8)}
                </svg>
                {@render title("Awesome Evolution Doc", "grey")}
            </section>

            <section class="panel strength">
                <svg viewBox="24 939 1888 71" preserveAspectRatio="xMaxYMin slice">
                    <rect x="26" y="939" width="1681" height="56" fill="#ffff8c" />
                    {#each strength as [from, to]}
                        <rect x={from} y="939" width={to - from} height="56" fill="#40ff40" />
                    {/each}
                    {@render grid(939, 995, [943, 993])}
                    <line x1="24" x2="1704" y1="968.5" y2="968.5" stroke="#000" />
                    <line class="edge" x1="24" x2="1877" y1="995.5" y2="995.5" />
                    {#each years as year, i}
                        <line class="edge" x1={Math.round(barX(i * 8)) + 0.5} x2={Math.round(barX(i * 8)) + 0.5} y1="996" y2="999" />
                        <text class="small year" x={Math.round(barX(i * 8))} y="1008">{year}</text>
                    {/each}
                    <rect x="1876" y="939" width="36" height="56" fill="#fff" />
                    <line class="edge" x1="1876.5" x2="1876.5" y1="939" y2="996" />
                    <text class="axis" x="1883" y="946">0,505</text>
                    {@render tag(968, "0,5000", "#000", 40)}
                    <text class="axis" x="1883" y="994">0,495</text>
                </svg>
                {@render title("Barra Fuerza Fondo Mercado v4 (f)", "split reverse")}
            </section>
        </main>
    </div>

    <footer class="statusbar">
        <button class="plain pencil" aria-label="Dibujar"><svg width="18" height="16" viewBox="0 0 18 16"><path d="M2 3l3 10L15 2" fill="none" stroke="#555" stroke-width="1.500" /><path d="M6 13L13 3l3 2-8 9z" fill="#ffd020" stroke="#a70" stroke-width=".6" /><path d="M2 2l6 7" stroke="#d22" stroke-width="1.500" /></svg></button>
        <div class="actions">
            <button class="plain" aria-label="Compartir"><svg width="17" height="16" viewBox="0 0 17 16"><path d="M11 3L4 8l7 5" fill="none" stroke="#fff" stroke-width="1.500" /><circle cx="11.500" cy="3" r="2" fill="#fff" /><circle cx="4" cy="8" r="2" fill="#fff" /><circle cx="11.500" cy="13" r="2" fill="#fff" /><path d="M11 12h6l-3 3z" /></svg></button>
            <button class="plain" aria-label="Chat"><svg width="17" height="16" viewBox="0 0 17 16"><path d="M2 2h10v8H2z" fill="#c8d8f0" stroke="#6890c8" /><path d="M5 5h11v7H9l-3 3v-3H5z" fill="#3070e0" /><path d="M8 8h1M10 8h1M12 8h1" stroke="#fff" stroke-width="1.500" /></svg></button>
            <button class="plain" aria-label="Informe"><svg width="17" height="16" viewBox="0 0 17 16"><path d="M3 2h11v12H3z" fill="#eee" stroke="#556" /><path d="M4 4h5M4 6h4M4 9h8M4 11h8" stroke="#222" /><path d="M9 3l4 4" stroke="#e22" stroke-width="2" /><path d="M9 12l4-2" stroke="#0a0" stroke-width="2" /></svg></button>
            <button class="plain" aria-label="Libro de órdenes"><svg width="17" height="16" viewBox="0 0 17 16"><path d="M8 1v14" stroke="#222" /><path d="M2 2h6v3H2zM3 8h5v3H3zM2 12h6v3H2z" fill="#10b020" /><path d="M8 2h5v2H8zM8 6h7v3H8zM8 11h6v2H8z" fill="#e02828" /></svg></button>
            <button class="plain" aria-label="Ventanas"><svg width="17" height="16" viewBox="0 0 17 16"><path d="M1 1h10v8H1zM6 6h10v9H6z" fill="#fff" stroke="#2860c0" stroke-width="1.500" /><path d="M7 12l3-3 2 3 3-3" fill="none" stroke="#0a0" /></svg></button>
        </div>
        <button class="plain fold" aria-label="Plegar">«</button>
        <div class="scrollbar">
            <button aria-label="Izquierda"><svg width="6" height="8"><path d="M4 1L2 4l2 3" fill="none" stroke="#111" stroke-width="1.500" /></svg></button>
            <div class="track"><div class="thumb"></div></div>
            <button aria-label="Derecha"><svg width="6" height="8"><path d="M2 1l2 3-2 3" fill="none" stroke="#111" stroke-width="1.500" /></svg></button>
        </div>
        <div class="actions right">
            <button class="plain" aria-label="Deshacer"><svg width="17" height="16" viewBox="0 0 17 16"><path d="M4 6c6-2 10 1 7 8" fill="none" stroke="#5b9bd0" stroke-width="2" /><path d="M2 6l5-4v8z" fill="#5b9bd0" /></svg></button>
            <button class="plain" aria-label="Rehacer"><svg width="17" height="16" viewBox="0 0 17 16"><path d="M13 6C7 4 3 7 6 14" fill="none" stroke="#6fb0cc" stroke-width="2" /><path d="M15 6l-5-4v8z" fill="#6fb0cc" /></svg></button>
            <button class="plain" aria-label="Ajustes"><svg width="17" height="16" viewBox="0 0 17 16"><path d="M12 0v14" stroke="#084" /><path d="M9 2h6v9H9z" fill="#18c030" /><path d="M2 7h6v8H2z" fill="#e02828" /><path d="M4 13l8-8" stroke="#333" stroke-width="4" /><path d="M4 13l8-8" stroke="#fff" stroke-width="2" /></svg></button>
            <button class="plain" aria-label="Ajustar escala"><svg width="17" height="16" viewBox="0 0 17 16">{@render magnifier(6, "")}<path d="M15 2v9M13 4l2-2 2 2M1 15h8" stroke="#00f" fill="none" /></svg></button>
            <button class="plain" aria-label="Alejar"><svg width="17" height="16" viewBox="0 0 17 16">{@render magnifier(7, "-")}</svg></button>
            <button class="plain" aria-label="Acercar"><svg width="17" height="16" viewBox="0 0 17 16">{@render magnifier(7, "+")}</svg></button>
            <button class="plain" aria-label="Ir al final"><svg width="17" height="16" viewBox="0 0 17 16"><path d="M2 3h14" stroke="#222" stroke-width="3" stroke-dasharray="3 1" /><path d="M9 6v6M6 10l3 4 3-4" stroke="#2060d0" stroke-width="1.500" fill="none" /></svg></button>
        </div>
    </footer>
</div>

<style>
    :global(body) {
        margin: 0;
        background: #9dbbc9;
    }

    .platform {
        display: flex;
        flex-direction: column;
        height: 100vh;
        overflow: hidden;
        font-family: "Liberation Sans", Arial, sans-serif;
        font-size: 10px;
        color: #111;
    }

    button,
    select {
        box-sizing: border-box;
        margin: 0;
        padding: 0;
        border: 0;
        background: none;
        font: inherit;
        color: inherit;
    }

    svg {
        display: block;
        flex: none;
    }

    .plain {
        display: flex;
        align-items: center;
        justify-content: center;
    }

    .toolbar {
        box-sizing: border-box;
        display: flex;
        align-items: center;
        flex: none;
        height: 23px;
        padding-left: 4px;
        border-top: 1px solid #4a6472;
        border-bottom: 2px solid #4f6b79;
        background: linear-gradient(#b9d5e1, #98b6c4);
        font-weight: bold;
        white-space: nowrap;
    }

    .divider {
        flex: none;
        width: 1px;
        height: 20px;
        margin: 0 2px;
        background: #6f8c9a;
    }

    .link {
        width: 12px;
    }

    .picker {
        display: flex;
        align-items: center;
        gap: 2px;
        padding: 0 3px;
    }

    select {
        appearance: none;
        font-weight: bold;
    }

    .symbol {
        width: 43px;
    }

    .period {
        width: 52px;
    }

    .amount {
        width: 66px;
    }

    .group {
        display: flex;
        gap: 3px;
    }

    .key {
        height: 16px;
        border: 1px solid #7d99a6;
        border-radius: 2px;
        background: #a9c5d2;
    }

    .key.active {
        background: #8ba0ab;
        border-color: #6b838f;
    }

    .indicators {
        gap: 2px;
        padding: 0 0 0 1px;
    }

    .more {
        width: 9px;
    }

    .info {
        width: 10px;
        height: 10px;
        margin-left: 4px;
        border: 1px solid #889;
        background: #e8edf0;
        font-size: 8px;
        line-height: 8px;
        color: #567;
    }

    .dot {
        width: 7px;
        height: 7px;
        margin: 0 5px 0 8px;
        border-radius: 50%;
        background: #46a000;
    }

    .change {
        padding: 0 1px;
        border: 1px solid #d83a3a;
        border-radius: 2px;
        background: #f65050;
        color: #fff;
        font-weight: normal;
        line-height: 12px;
    }

    time {
        margin: 0 3px 0 4px;
        font-size: 9px;
    }

    .name {
        padding: 0 1px;
        border: 1px solid #9d92d4;
        border-radius: 3px;
        background: #bdbdea;
        font-weight: normal;
        line-height: 12px;
    }

    .window {
        display: flex;
        align-items: center;
        gap: 3px;
        margin-left: auto;
    }

    .workspace {
        display: flex;
        flex: 1;
        min-height: 0;
    }

    .tools {
        box-sizing: border-box;
        display: flex;
        flex-direction: column;
        flex: none;
        width: 24px;
        border-right: 1px solid #6f8c9a;
        background: #9dbbc9;
    }

    .scroll {
        display: flex;
        align-items: center;
        justify-content: center;
        flex: none;
        height: 12px;
        border-bottom: 1px solid #7795a3;
    }

    .down {
        margin: auto 0 4px;
        border-top: 1px solid #7795a3;
        background: #b9d5e1;
    }

    .tool {
        display: flex;
        align-items: center;
        justify-content: center;
        flex: none;
        width: 22px;
        height: 22px;
        border-radius: 2px;
    }

    .tool.active {
        border: 1px solid #70858f;
        background: #93a9b4;
    }

    .large {
        height: 25px;
    }

    .charts {
        display: flex;
        flex-direction: column;
        flex: 1;
        min-width: 0;
        background: #fff;
    }

    .panel {
        box-sizing: border-box;
        position: relative;
        flex: none;
        border-bottom: 1px solid #6f8590;
    }

    .panel > svg {
        width: 100%;
        height: 100%;
    }

    .price {
        flex: 1;
        min-height: 0;
    }

    .trains {
        height: 81px;
    }

    .willy {
        height: 83px;
    }

    .evolution {
        height: 86px;
    }

    .strength {
        height: 72px;
    }

    .legend {
        position: absolute;
        top: 0;
        left: 0;
        display: flex;
        align-items: stretch;
        height: 14px;
        border: 1px solid #6f8590;
        border-top: 0;
        background: #cfdde4;
        font-weight: bold;
    }

    .close {
        display: flex;
        align-items: center;
        justify-content: center;
        width: 14px;
        padding: 0 1px;
    }

    .series {
        display: flex;
        align-items: center;
        gap: 3px;
        padding: 0 1px 0 2px;
        border-left: 1px solid #6f8590;
        white-space: nowrap;
    }

    input {
        appearance: none;
        width: 8px;
        height: 8px;
        margin: 0;
        border: 1px solid #778;
    }

    .swatch {
        width: 8px;
        height: 8px;
        background: #748b95;
    }

    .swatch.black {
        background: #000;
    }

    .swatch.split {
        background: linear-gradient(90deg, #748b95 50%, #000 50%);
    }

    .swatch.reverse {
        background: linear-gradient(90deg, #000 50%, #748b95 50%);
    }

    .swatch.stripes {
        background: linear-gradient(90deg, #222 25%, #e02020 25% 50%, #446 50% 75%, #e02020 75%);
    }

    .grid {
        stroke: #808080;
        stroke-opacity: 0.25;
        stroke-dasharray: 1 3;
    }

    .edge {
        stroke: #6f8590;
    }

    .axis,
    .small {
        font-size: 9px;
        font-weight: bold;
    }

    .small {
        text-anchor: middle;
    }

    .wave {
        font-size: 10px;
        text-anchor: middle;
    }

    .title {
        font-size: 24px;
        font-weight: bold;
    }

    .credit {
        font-size: 10px;
    }

    .statusbar {
        display: flex;
        align-items: center;
        flex: none;
        height: 19px;
        background: #9dbbc9;
    }

    .pencil {
        box-sizing: border-box;
        width: 24px;
        height: 19px;
        border-right: 1px solid #6f8c9a;
        background: #8ba0ab;
    }

    .actions {
        display: flex;
        gap: 4px;
        padding: 0 2px;
    }

    .fold {
        width: 16px;
        font-size: 14px;
        line-height: 14px;
    }

    .scrollbar {
        box-sizing: border-box;
        display: flex;
        flex: 1;
        height: 13px;
        border: 1px solid #5f7c8a;
        background: #9dbbc9;
    }

    .scrollbar button {
        display: flex;
        align-items: center;
        justify-content: center;
        width: 12px;
        background: #b9d5e1;
    }

    .track {
        flex: 1;
        padding-left: 92px;
        border: solid #5f7c8a;
        border-width: 0 1px;
    }

    .thumb {
        height: 100%;
        border-left: 1px solid #5f7c8a;
        background: linear-gradient(#c0dae6, #a4c2d0);
    }

    .right {
        gap: 5px;
        margin-right: -3px;
        padding: 0 0 0 5px;
    }
</style>
